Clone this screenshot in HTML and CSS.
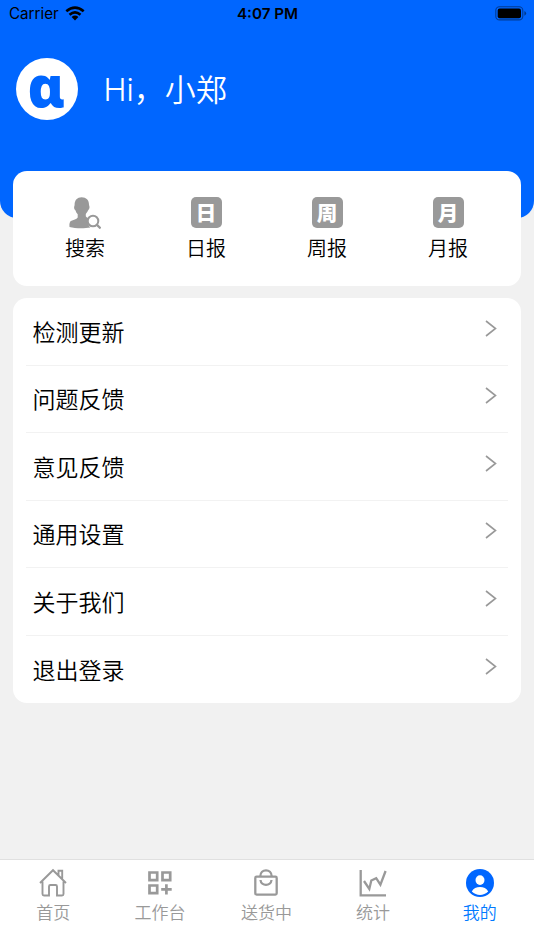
FILE: index.html
```html
<!DOCTYPE html>
<html lang="zh-CN">
<head>
<meta charset="utf-8">
<meta name="viewport" content="width=device-width">
<title>我的</title>
<link rel="stylesheet" href="styles.css">
</head>
<body>
<div class="app">
  <header class="header">
    <div class="status">
      <div class="carrier"><span class="carrier-name">Carrier</span>
        <svg width="20" height="15" viewBox="0 0 20 15" fill="none" stroke="#000" stroke-width="2.6"><path d="M1.3 5.3Q10-2.2 18.7 5.3M4.5 8.8Q10 4.1 15.5 8.8"/><path d="M6.6 11Q10 8.2 13.4 11L10 14.4Z" fill="#000" stroke="none"/></svg>
      </div>
      <span class="time">4:07 PM</span>
      <svg class="battery" width="32" height="15" viewBox="0 0 32 15"><rect x=".8" y=".7" width="27" height="13.2" rx="3.7" fill="none" stroke="#000" stroke-opacity=".42" stroke-width="1.1"/><rect x="2.7" y="2.5" width="23.3" height="9.7" rx="2" fill="#000"/><path d="M29.4 5v4.7q1.7-.6 1.7-2.35T29.4 5" fill="#000" fill-opacity=".45"/></svg>
    </div>
    <div class="profile">
      <div class="avatar"><span>α</span></div>
      <h1 class="greeting">Hi，小郑</h1>
    </div>
  </header>

  <main class="content">
    <section class="card shortcuts">
      <a class="shortcut">
        <svg class="shortcut-icon" width="32" height="32" viewBox="0 0 32 32"><path fill="#999" d="M12.600.3C17.300.3 20 3.200 20 7.600c0 1.200.6 1.300.5 2.800-.1 1.700-1 2-1.500 3.200-.6 1.500-1.200 2.200-2.200 3.300v2.300c.5 1.100 1.800 1.500 3.300 2.100-2.200 3.300-1 7 1.300 9.300-6.300 1-15.200 1-20.900-.6-.3-3 .1-5.100 1.400-5.900 2.700-1.200 5.600-1.600 6.800-3.600v-3.200c-1.200-1.300-1.800-2.500-2.100-3.800-.8-.6-1.500-1.600-1.500-3 0-1.100.5-1.600.5-2.700C5.600 3.200 8.300.3 12.600.3Z"/><circle cx="24" cy="24" r="5.300" fill="none" stroke="#999" stroke-width="2"/><path d="m27.700 27.700 3.900 3.700" stroke="#999" stroke-width="2.300"/></svg>
        <span class="shortcut-label">搜索</span>
      </a>
      <a class="shortcut"><span class="shortcut-icon tile">日</span><span class="shortcut-label">日报</span></a>
      <a class="shortcut"><span class="shortcut-icon tile">周</span><span class="shortcut-label">周报</span></a>
      <a class="shortcut"><span class="shortcut-icon tile">月</span><span class="shortcut-label">月报</span></a>
    </section>

    <section class="card menu">
      <a class="row"><span>检测更新</span><svg class="chevron" viewBox="0 0 12 17"><path d="m1 1 9.500 7.500L1 16"/></svg></a>
      <a class="row"><span>问题反馈</span><svg class="chevron" viewBox="0 0 12 17"><path d="m1 1 9.500 7.500L1 16"/></svg></a>
      <a class="row"><span>意见反馈</span><svg class="chevron" viewBox="0 0 12 17"><path d="m1 1 9.500 7.500L1 16"/></svg></a>
      <a class="row"><span>通用设置</span><svg class="chevron" viewBox="0 0 12 17"><path d="m1 1 9.500 7.500L1 16"/></svg></a>
      <a class="row"><span>关于我们</span><svg class="chevron" viewBox="0 0 12 17"><path d="m1 1 9.500 7.500L1 16"/></svg></a>
      <a class="row"><span>退出登录</span><svg class="chevron" viewBox="0 0 12 17"><path d="m1 1 9.500 7.500L1 16"/></svg></a>
    </section>
  </main>

  <nav class="tabs">
    <a class="tab"><svg class="tab-icon" viewBox="0 0 30 30"><path d="M2 15 15 2.200 28 15M4.500 13.500V26q0 1.500 1.500 1.500h5V18.400q0-1.400 1.400-1.400h5.200q1.400 0 1.400 1.400v9.100h5q1.500 0 1.500-1.500V13.500M20.500 7V2.800h3.700v7.700"/></svg><span>首页</span></a>
    <a class="tab"><svg class="tab-icon squares" viewBox="0 0 30 30"><path d="M4.500 4.500h7.700v7.700H4.500zM17.500 4.500h7.700v7.700h-7.700zM4.500 17.500h7.700v7.700H4.500zM21.400 16.200v10.300M16.200 21.400h10.500"/></svg><span>工作台</span></a>
    <a class="tab"><svg class="tab-icon bag" viewBox="0 0 30 30"><rect x="4.300" y="8.700" width="21.400" height="17.900" rx="1.300"/><path d="M9.300 8.500C9.300.3 20.700.3 20.700 8.500M9.500 12c.6 6.500 10.400 6.500 11 0"/></svg><span>送货中</span></a>
    <a class="tab"><svg class="tab-icon chart" viewBox="0 0 30 30"><path d="M2.700 2v25.300H28M6 13l5.300 8 2-8.500 4.900-2.300 4.200 6.500L27.600 3"/></svg><span>统计</span></a>
    <a class="tab active"><svg class="tab-icon" viewBox="0 0 30 30"><circle cx="15" cy="15" r="14" fill="#06f" stroke="none"/><ellipse cx="15" cy="12.100" rx="4.500" ry="4.900" fill="#fff" stroke="none"/><path d="M6.800 23.500c2.700-5.900 13.700-5.900 16.400 0-4.600 4.500-11.800 4.500-16.400 0Z" fill="#fff" stroke="none"/></svg><span>我的</span></a>
  </nav>
</div>
</body>
</html>
```
FILE: styles.css
```css
* { box-sizing: border-box; }

body {
  margin: 0;
  font-family: "Noto Sans CJK SC", sans-serif;
  font-weight: 350;
  color: #000;
}

.app {
  height: 950px;
  display: flex;
  flex-direction: column;
  background: #f1f1f1;
  overflow: hidden;
}

.header {
  height: 218px;
  flex: none;
  background: #06f;
  border-radius: 0 0 17px 17px;
}

.status {
  height: 28px;
  padding: 0 7px 0 9px;
  display: grid;
  grid-template-columns: 1fr auto 1fr;
  align-items: center;
  font-family: Inter, sans-serif;
  font-size: 15.200px;
  line-height: 28px;
}

.carrier { display: flex; align-items: center; gap: 6px; font-weight: 400; }
.carrier svg { margin-top: -2px; }
.time { font-weight: 600; margin-left: -1px; }
.battery { justify-self: end; margin-top: -1px; }

.profile {
  display: flex;
  align-items: center;
  gap: 26px;
  padding: 30px 15px 0 15.500px;
}

.avatar {
  width: 62px;
  height: 62px;
  border-radius: 50%;
  background: #fff;
  color: #06f;
  display: flex;
  align-items: center;
  justify-content: center;
  font: 900 56px/62px "Noto Sans", sans-serif;
}

.avatar span { margin-top: -9px; }

.greeting {
  margin: 2px 0 0;
  font-family: Inter, "Noto Sans CJK SC", sans-serif;
  font-size: 31px;
  line-height: 46px;
  font-weight: 350;
  color: #fff;
}

.content {
  flex: 1;
  margin-top: -46.700px;
  padding: 0 13px;
  display: flex;
  flex-direction: column;
  gap: 12.500px;
}

.card { background: #fff; border-radius: 14px; }

.shortcuts {
  height: 114.500px;
  padding: 25.500px 12.500px 0 11.500px;
  display: grid;
  grid-template-columns: repeat(4, 1fr);
}

.shortcut { display: flex; flex-direction: column; align-items: center; }
.shortcut-icon { width: 32px; height: 32px; }

.tile {
  width: 31px;
  height: 31px;
  margin-bottom: 1px;
  border-radius: 5px;
  background: #999;
  color: #fff;
  text-align: center;
  font-size: 20.500px;
  line-height: 31px;
  font-weight: 900;
}

.shortcut-label { font-size: 20px; line-height: 30px; margin-top: 4.500px; }

.menu { padding: 0 13px; }

.row {
  height: 67.500px;
  padding: 0 11px 0 6.500px;
  display: flex;
  align-items: center;
  justify-content: space-between;
  border-bottom: 1px solid #f2f2f2;
  font-size: 23px;
  line-height: 34px;
}

.row span { margin-top: -2px; }
.row:last-child { border-bottom: 0; }
.chevron { width: 12px; height: 17px; margin-top: -7px; fill: none; stroke: #999; stroke-width: 1.600; }

.tabs {
  height: 91px;
  flex: none;
  display: grid;
  grid-template-columns: repeat(5, 1fr);
  padding: 8px 1px 0 0;
  background: #fff;
  border-top: 1px solid #e0e0e0;
}

.tab {
  display: flex;
  flex-direction: column;
  align-items: center;
  color: #999;
  font-size: 17px;
  line-height: 27px;
}

.tab-icon { width: 30px; height: 30px; fill: none; stroke: #999; stroke-width: 1.900; }
.squares { stroke-width: 2.700; }
.bag, .chart { stroke-width: 2.300; }
.active { color: #007aff; }
```
